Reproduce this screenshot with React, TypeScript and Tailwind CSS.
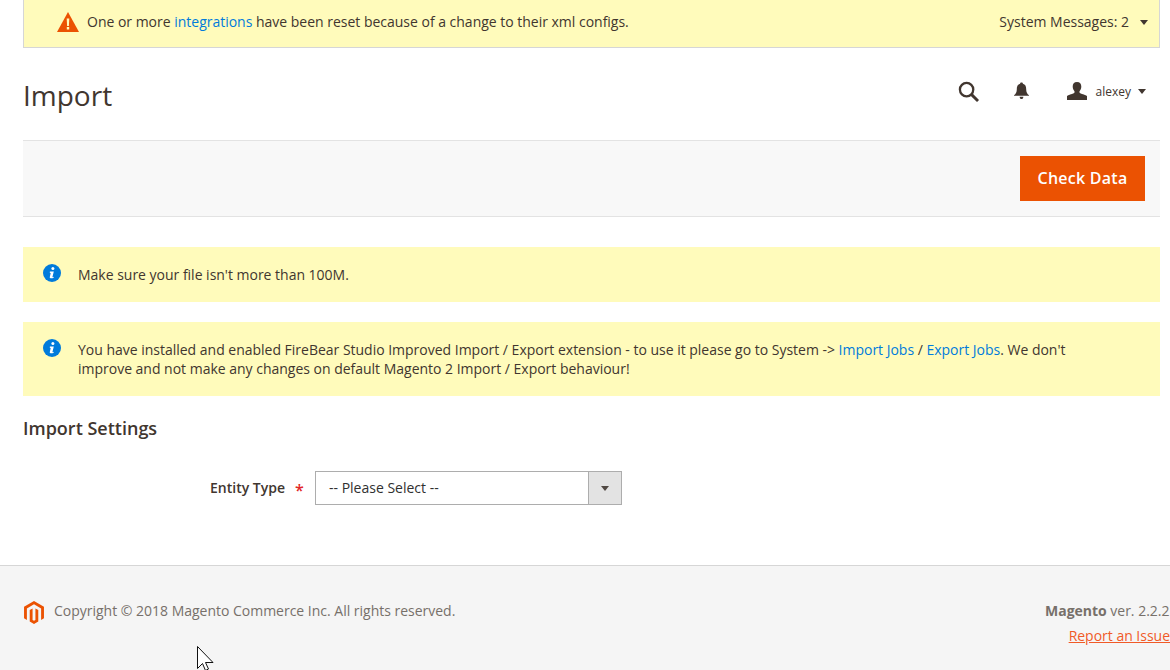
const font = { fontFamily: '"Open Sans", sans-serif' };

function Caret({ className }: { className: string }) {
  return (
    <svg viewBox="0 0 8 5" className={className} fill="currentColor">
      <path d="M0 0h8L4 5z" />
    </svg>
  );
}

function InfoIcon() {
  return (
    <svg viewBox="0 0 18 18" className="mt-[1px] h-[18px] w-[18px] shrink-0">
      <circle cx="9" cy="9" r="9" fill="#007bdb" />
      <circle cx="9.9" cy="4.6" r="1.5" fill="#fff" />
      <path d="M6.9 7.600h3.900l-1.300 5.200c-.1.400.3.500 1.300 0l-.2.900c-1 .5-2.200.7-3 .5-.8-.2-.9-.8-.8-1.300l.9-3.900-.9-.3z" fill="#fff" />
    </svg>
  );
}

function Notice({ children, className }: { children: React.ReactNode; className: string }) {
  return (
    <div className={`flex bg-[#fffbbb] pl-5 pr-[90px] text-sm leading-[19px] tracking-[-0.012px] text-[#41362f] ${className}`}>
      <InfoIcon />
      <div className="ml-[17px]">{children}</div>
    </div>
  );
}

export default function App() {
  return (
    <div className="flex h-[670px] w-[1170px] flex-col overflow-hidden bg-white" style={font}>
      <div className="ml-[23px] mr-[10px]">
        {/* System messages */}
        <div className="box-border flex h-12 items-center justify-between border-x border-b border-[#d6d6d6] bg-[#fffbbb] pl-[33px] pr-[11px] text-sm tracking-[-0.012px] text-[#41362f]">
          <div className="flex items-center pb-[3px]">
            <svg viewBox="0 0 22 20" className="mr-2 h-5 w-[22px]">
              <path d="M11 0l11 20H0z" fill="#eb5202" />
              <path d="M9.700 6.500h2.600l-.4 7.500h-1.800z M9.800 15h2.400v2.400H9.800z" fill="#fffbbb" />
            </svg>
            <span>
              One or more <span className="text-[#007bdb]">integrations</span> have been reset because of a change to their xml configs.
            </span>
          </div>
          <div className="flex items-center pb-[3px]">
            <span>System Messages: 2</span>
            <Caret className="ml-[11px] h-[5px] w-2 text-[#41362f]" />
          </div>
        </div>

        {/* Header */}
        <div className="flex h-[93px] items-center justify-between border-b border-[#e3e3e3]">
          <h1 className="mt-[1px] text-[28px] font-normal leading-none text-[#41362f]">Import</h1>
          <div className="mb-[6px] flex items-center pr-[14px] text-[#41362f]">
            <svg viewBox="0 0 22 22" className="h-[21px] w-[21px]" fill="none" stroke="#41362f">
              <circle cx="9" cy="9" r="7" strokeWidth="2.400" />
              <path d="M14 14l7 7" strokeWidth="3" />
            </svg>
            <svg viewBox="0 0 16 18" className="ml-[35px] h-[18px] w-[15px]" fill="#41362f">
              <path d="M8 0c1 0 1.500.6 1.500 1.300C12 2 13 4 13 7c0 3 1 5 3 6.500v.5H0v-.5C2 12 3 10 3 7c0-3 1-5 3.500-5.700C6.500.6 7 0 8 0z" />
              <path d="M6 15h4c0 1.500-1 2.500-2 2.500S6 16.500 6 15z" />
            </svg>
            <svg viewBox="0 0 20 18" className="ml-[38px] h-[18px] w-5" fill="#41362f">
              <path d="M10 0c3 0 4.300 2 4.300 4.500 0 2-.8 3.500-1.800 4.700v1.300c0 1 4 1.500 7.500 3.500v4H0v-4c3.500-2 7.500-2.500 7.500-3.500V9.200C6.500 8 5.700 6.500 5.700 4.500 5.700 2 7 0 10 0z" />
            </svg>
            <span className="ml-[9px] mt-[2px] text-xs">alexey</span>
            <Caret className="ml-[7px] h-[5px] w-2" />
          </div>
        </div>

        {/* Action bar */}
        <div className="flex h-[76px] items-center justify-end border-b border-[#e3e3e3] bg-[#f8f8f8] pr-[15px]">
          <button className="h-[45px] w-[125px] bg-[#eb5202] pb-[2px] text-base font-semibold tracking-[0.25px] text-white">Check Data</button>
        </div>

        <Notice className="mt-[30px] h-[55px] pt-4">
          <div className="pt-[2px]">Make sure your file isn't more than 100M.</div>
        </Notice>

        <Notice className="mt-[20px] h-[74px] pt-4">
          <div className="pt-[2px]">
            You have installed and enabled FireBear Studio Improved Import / Export extension - to use it please go to System -&gt;{' '}
            <span className="text-[#007bdb]">Import Jobs</span> / <span className="text-[#007bdb]">Export Jobs</span>. We don't improve and not make any changes on default Magento 2 Import / Export behaviour!
          </div>
        </Notice>

        <h2 className="mt-[20px] text-lg font-semibold leading-[24px] text-[#41362f]">Import Settings</h2>

        {/* Entity type field */}
        <div className="mt-[31px] flex h-[34px] items-center">
          <div className="w-[262px] text-right text-sm font-semibold text-[#41362f]">Entity Type</div>
          <span className="ml-[10px] mt-[4px] w-[20px] text-base font-semibold leading-none text-[#e22626]">*</span>
          <div className="flex h-[34px] w-[307px] border border-[#adadad]">
            <div className="flex-1 pl-[13px] text-sm leading-[31px] text-[#303030]">-- Please Select --</div>
            <div className="flex w-[33px] items-center justify-center border-l border-[#adadad] bg-[#e3e3e3]">
              <Caret className="h-[5px] w-2 text-[#514943]" />
            </div>
          </div>
        </div>
      </div>

      {/* Footer */}
      <footer className="relative mt-[60px] flex h-[105px] justify-between border-t border-[#d6d6d6] bg-[#f5f5f5] pl-[23px] text-sm tracking-[-0.012px] text-[#77706a]">
        <div className="flex items-start pt-[35px]">
          <svg viewBox="1.600 0 20.800 24" className="ml-[1px] h-[23px] w-5" fill="#eb5202">
            <path d="M12 24l-4.455-2.572v-12l2.970-1.715v12.001L12 20.570l1.485-.856V7.713l2.970 1.715v12L12 24zM22.391 6v12l-2.969 1.714V7.713L12 3.430 4.574 7.713v12.001L1.609 18V6L12 0l10.391 6z" />
          </svg>
          <span className="ml-[10px] leading-[20px]">Copyright © 2018 Magento Commerce Inc. All rights reserved.</span>
        </div>
        <div className="w-[125px] shrink-0 whitespace-nowrap pt-[35px]">
          <div className="leading-[19px]">
            <span className="font-bold">Magento</span> ver. 2.2.2
          </div>
          <div className="mt-[6px] text-right leading-[19px] text-[#f05a28] underline">Report an Issue</div>
        </div>
        <svg viewBox="0 0 19 25" className="absolute left-[197px] top-[80px] h-[25px] w-[19px]" fill="#fff" stroke="#111" strokeWidth="1">
          <path d="M.5.500v22l5-5 3 7 3-1.500-3-6.500h7.500z" />
        </svg>
      </footer>
    </div>
  );
}
